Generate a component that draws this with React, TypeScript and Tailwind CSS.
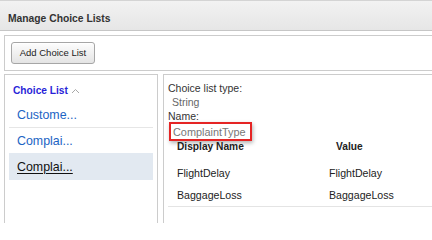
import React from 'react';

const lists = [
  { label: 'Custome...', selected: false },
  { label: 'Complai...', selected: false },
  { label: 'Complai...', selected: true },
];

const rows = [
  { name: 'FlightDelay', value: 'FlightDelay' },
  { name: 'BaggageLoss', value: 'BaggageLoss' },
];

export default function App() {
  return (
    <div className="h-[223px] w-[432px] overflow-hidden bg-white font-['Liberation_Sans',Arial,sans-serif] text-[#333]">
      {/* Title bar */}
      <div className="flex h-[31px] items-center border-t border-b border-t-[#d4d4d4] border-b-[#c6c6c6] bg-gradient-to-b from-[#f2f2f2] to-[#e6e6e6] pl-[8px] pt-[6px]">
        <span className="text-[10.3px] font-bold text-[#333]">Manage Choice Lists</span>
      </div>

      <div className="pl-[4px]">
        {/* Toolbar */}
        <div className="mt-[4px] h-[36px] border border-r-0 border-[#cccccc] pl-[6px] pt-[6px]">
          <button className="flex h-[22px] w-[84px] items-center justify-center rounded-[3px] border border-[#a6a6a6] bg-gradient-to-b from-[#fdfdfd] to-[#e4e4e4] text-[9.5px] text-[#222] shadow-[inset_0_1px_0_#fff]">
            Add Choice List
          </button>
        </div>

        <div className="mt-[3px] flex gap-[5px]">
          {/* Left list panel */}
          <div className="h-[160px] w-[154px] shrink-0 border border-b-0 border-[#cccccc] px-[4px]">
            <div className="flex h-[27px] items-center pl-[4px] pt-[5px]">
              <span className="text-[10.2px] font-bold text-[#2a1fd8]">Choice List</span>
              <svg width="9" height="6" viewBox="0 0 9 6" className="ml-[3px] mt-[-1px]">
                <path d="M1 5 L4.5 1.5 L8 5" fill="none" stroke="#a8a8a8" strokeWidth="1" />
              </svg>
            </div>
            <div className="flex h-[26px] items-center border-b border-[#e6e6e6] pl-[8px] pt-[2px]">
              <span className="text-[12.4px] text-[#1c64c4]">{lists[0].label}</span>
            </div>
            <div className="flex h-[25px] items-center pl-[8px] pt-[1px]">
              <span className="text-[12.4px] text-[#1c64c4]">{lists[1].label}</span>
            </div>
            <div className="flex h-[27px] items-center bg-[#e2e9f1] pl-[8px] pt-[1px]">
              <span className="text-[12.4px] text-[#111] underline underline-offset-[2px]">
                {lists[2].label}
              </span>
            </div>
          </div>

          {/* Right detail panel */}
          <div className="h-[160px] flex-1 border-t border-l border-[#cccccc] pl-[4px] pt-[6px] text-[10.5px] leading-[14px]">
            <div className="text-[#333]">Choice list type:</div>
            <div className="pl-[4px] text-[#666]">String</div>
            <div className="text-[#333]">Name:</div>
            <div className="mt-[-1px] ml-[1px] flex h-[19px] w-[83px] items-center border-2 border-[#e52424] pl-[2px] text-[10.9px] text-[#777] shadow-[1px_2px_4px_rgba(0,0,0,0.3)]">
              ComplaintType
            </div>

            <div className="border-b border-[#e4e4e4]">
              <div className="flex h-[21px] items-start pl-[9px] text-[10.2px] font-bold leading-[12px] text-[#222]">
                <span className="w-[159px]">Display Name</span>
                <span>Value</span>
              </div>
              {rows.map((r) => (
                <div key={r.name} className="flex h-[22px] items-center pl-[9px] text-[10.6px] text-[#222]">
                  <span className="w-[152px]">{r.name}</span>
                  <span>{r.value}</span>
                </div>
              ))}
            </div>
          </div>
        </div>
      </div>
    </div>
  );
}
